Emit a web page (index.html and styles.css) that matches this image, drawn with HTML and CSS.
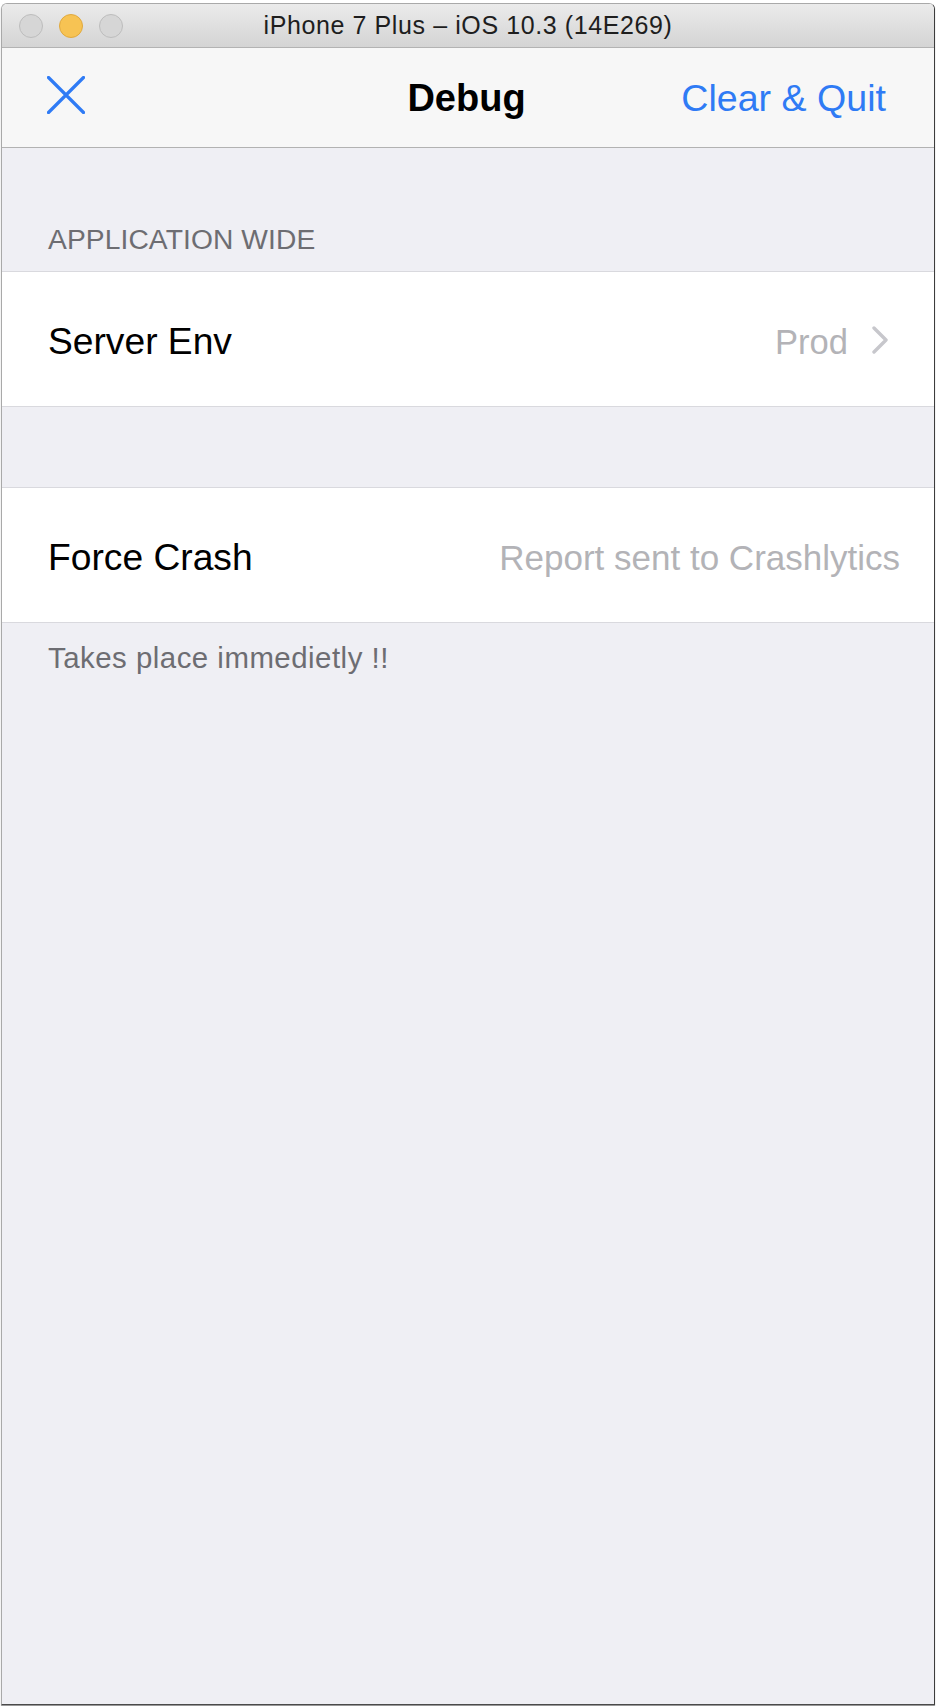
FILE: index.html
```html
<!DOCTYPE html>
<html lang="en">
<head>
<meta charset="utf-8">
<title>Debug</title>
<link rel="stylesheet" href="styles.css">
</head>
<body>
<div class="window">
  <div class="titlebar">
    <div class="lights">
      <span class="light"></span>
      <span class="light light-yellow"></span>
      <span class="light"></span>
    </div>
    <div class="window-title">iPhone 7 Plus – iOS 10.3 (14E269)</div>
    <div class="titlebar-spacer"></div>
  </div>
  <div class="screen">
    <div class="navbar">
      <div class="nav-left">
        <svg class="close-icon" width="38" height="38" viewBox="0 0 38 38" aria-hidden="true">
          <path d="M1.5 1.5 L36.5 36.5 M36.5 1.5 L1.5 36.5" stroke="#2f7bf5" stroke-width="3.2" stroke-linecap="round" fill="none"/>
        </svg>
      </div>
      <div class="nav-title">Debug</div>
      <div class="nav-right">Clear &amp; Quit</div>
    </div>
    <div class="section-header">APPLICATION WIDE</div>
    <div class="group">
      <div class="row">
        <span class="row-label">Server Env</span>
        <span class="row-detail">Prod</span>
        <svg class="chevron" width="16" height="28" viewBox="0 0 16 28" aria-hidden="true">
          <path d="M2 2 L14 14 L2 26" stroke="#c7c7cc" stroke-width="3.4" fill="none" stroke-linecap="round" stroke-linejoin="round"/>
        </svg>
      </div>
    </div>
    <div class="group group-spaced">
      <div class="row row-plain">
        <span class="row-label">Force Crash</span>
        <span class="row-detail row-detail-long">Report sent to Crashlytics</span>
      </div>
    </div>
    <div class="section-footer">Takes place immedietly !!</div>
  </div>
</div>
</body>
</html>
```

FILE: styles.css
```css
html, body {
  margin: 0;
  padding: 0;
  background: #ffffff;
}

body {
  font-family: "Liberation Sans", Arial, sans-serif;
  width: 938px;
  height: 1706px;
  overflow: hidden;
}

.window {
  margin: 3px 0 0 1px;
  width: 934px;
  height: 1702px;
  box-sizing: border-box;
  border: 1px solid #a9a9a9;
  border-right-color: #3c3c3c;
  border-bottom-color: #4a4a4a;
  border-radius: 6px 6px 0 0;
  display: flex;
  flex-direction: column;
  overflow: hidden;
  box-shadow: 0 1px 1px rgba(0, 0, 0, 0.45);
}

.titlebar {
  height: 43px;
  flex: 0 0 auto;
  border-bottom: 1px solid #b3b3b3;
  background: linear-gradient(#ebebeb, #d4d4d4);
  display: grid;
  grid-template-columns: 1fr auto 1fr;
  align-items: center;
}

.lights {
  display: flex;
  gap: 16px;
  padding-left: 17px;
}

.light {
  width: 22px;
  height: 22px;
  border-radius: 50%;
  background: #d6d6d6;
  border: 1px solid #bdbdbd;
}

.light-yellow {
  background: #f7c353;
  border-color: #e0a93e;
}

.window-title {
  font-size: 25px;
  letter-spacing: 0.6px;
  color: #1e1e1e;
  line-height: 30px;
  padding-bottom: 2px;
}

.screen {
  flex: 1 1 auto;
  background: #efeff4;
}

.navbar {
  height: 99px;
  background: #f7f7f7;
  border-bottom: 1px solid #b2b2b2;
  display: grid;
  grid-template-columns: 1fr auto 1fr;
  align-items: center;
  padding: 0 48px 0 45px;
}

.nav-left {
  display: flex;
  align-items: center;
}

.close-icon {
  display: block;
  margin-bottom: 6px;
}

.nav-title {
  font-weight: bold;
  font-size: 38px;
  line-height: 46px;
  color: #000;
}

.nav-right {
  justify-self: end;
  font-size: 37.6px;
  line-height: 46px;
  color: #2f7bf5;
}

.section-header {
  padding: 74px 46px 15px 46px;
  font-size: 28.2px;
  letter-spacing: 0.1px;
  line-height: 34px;
  color: #6d6d72;
}

.group {
  background: #ffffff;
  border-top: 1px solid #d9d9de;
  border-bottom: 1px solid #d9d9de;
}

.group-spaced {
  margin-top: 80px;
}

.row {
  height: 134px;
  box-sizing: border-box;
  padding: 47px 46px 0 46px;
  display: flex;
  align-items: baseline;
}

.row-plain {
  padding-right: 34px;
}

.row-label {
  font-size: 37.2px;
  line-height: 44px;
  color: #000;
}

.row-detail {
  margin-left: auto;
  font-size: 34.6px;
  line-height: 44px;
  color: #b3b3b7;
}

.row-detail-long {
  font-size: 35px;
}

.chevron {
  display: block;
  margin-left: 24px;
  margin-bottom: 1px;
}

.section-footer {
  padding: 17px 46px 0 46px;
  font-size: 29.4px;
  letter-spacing: 0.5px;
  line-height: 35px;
  color: #6d6d72;
}
```
